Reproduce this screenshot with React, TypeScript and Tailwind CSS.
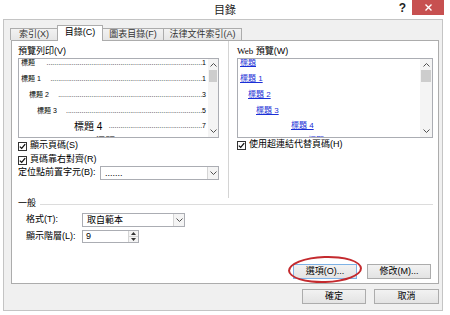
import React from 'react';

const Chevron = ({ up }: { up?: boolean }) => (
  <svg width="7" height="4" viewBox="0 0 7 4">
    <path d={up ? 'M0.5 3.5 L3.5 0.5 L6.5 3.5' : 'M0.5 0.5 L3.5 3.5 L6.5 0.5'} fill="none" stroke="#505050" strokeWidth="1" />
  </svg>
);

const Check = () => (
  <span className="w-[9px] h-[9px] border border-[#333] bg-white flex items-center justify-center shrink-0">
    <svg width="7" height="7" viewBox="0 0 7 7">
      <path d="M0.8 3.6 L2.7 5.4 L6.2 1.2" fill="none" stroke="#111" strokeWidth="1.3" />
    </svg>
  </span>
);

const Scrollbar = ({ w }: { w: string }) => (
  <div className={`${w} flex flex-col bg-[#f4f4f4]`}>
    <div className="h-[11px] flex items-center justify-center"><Chevron up /></div>
    <div className="h-[12px] bg-[#cdcdcd] mx-px" />
    <div className="flex-1" />
    <div className="h-[12px] flex items-center justify-center"><Chevron /></div>
  </div>
);

const Combo = ({ text, className }: { text: string; className: string }) => (
  <div className={`${className} h-full border border-[#abadb3] bg-white flex`}>
    <div className="flex-1 pl-[4px] leading-[12px] text-[9px] overflow-hidden whitespace-nowrap">{text}</div>
    <div className="w-[11px] border-l border-[#d5d5d5] bg-[#f4f4f4] flex items-center justify-center">
      <Chevron />
    </div>
  </div>
);

const Btn = ({ label, className }: { label: string; className: string }) => (
  <div className={`${className} h-[15px] border bg-gradient-to-b from-[#f2f2f2] to-[#e3e3e3] flex items-center justify-center text-[9px] leading-none`}>
    {label}
  </div>
);

// leader dots sized to fit each line
const TocLine = ({ pad, label, num, big, h, n }: { pad: string; label: string; num: string; big?: boolean; h: string; n: number }) => (
  <div className={`${pad} ${h} flex items-center pr-[2px] whitespace-nowrap ${big ? 'text-[10px]' : 'text-[7px]'}`}>
    <span>{label}</span>
    <span className="flex-1 text-right text-[7px] text-[#222]">{'.'.repeat(n)}</span>
    <span className="text-[7px]">{num}</span>
  </div>
);

const WebLine = ({ pad, label, h }: { pad: string; label: string; h: string }) => (
  <div className={`${pad} ${h} flex items-center text-[8px] whitespace-nowrap`}>
    <span className="text-[#1a2fd6] underline">{label}</span>
  </div>
);

export default function App() {
  return (
    <div className="relative w-[450px] h-[315px] bg-white overflow-hidden text-black font-['Liberation_Sans','Noto_Sans_CJK_TC',sans-serif]">
      {/* title bar */}
      <div className="h-[19px] grid grid-cols-[1fr_auto_1fr]">
        <div />
        <div className="text-[11px] leading-[20px] text-[#222]">目錄</div>
        <div className="flex justify-end items-start">
          <span className="text-[12px] font-bold leading-[16px] mr-[6px] text-[#222]">?</span>
          <div className="w-[32px] h-[15px] mr-[6px] bg-[#c75050] flex items-center justify-center">
            <svg width="7" height="7" viewBox="0 0 7 7">
              <path d="M0.5 0.5 L6.5 6.5 M6.5 0.5 L0.5 6.5" stroke="#fff" strokeWidth="1.4" />
            </svg>
          </div>
        </div>
      </div>

      {/* client area */}
      <div className="ml-[3px] w-[440px] h-[292px] border border-[#c4c4c4] bg-[#f0f0f0] pl-[6px] pt-[5px]">
        <div className="relative z-10 flex items-end h-[16px] -mb-px text-[9px]">
          <div className="w-[47px] h-[12px] mb-px border-t border-l border-[#acacac] bg-gradient-to-b from-[#f2f2f2] to-[#e6e6e6] flex items-center justify-center text-[#333]">索引(X)</div>
          <div className="w-[46px] h-[16px] border-t border-l border-r border-[#acacac] bg-white flex items-center justify-center pb-[2px]">目錄(C)</div>
          <div className="w-[60px] h-[12px] mb-px border-t border-[#acacac] bg-gradient-to-b from-[#f2f2f2] to-[#e6e6e6] flex items-center justify-center text-[#333]">圖表目錄(F)</div>
          <div className="w-[79px] h-[12px] mb-px border-t border-l border-r border-[#acacac] bg-gradient-to-b from-[#f2f2f2] to-[#e6e6e6] flex items-center justify-center text-[#333]">法律文件索引(A)</div>
        </div>

        <div className="ml-px w-[428px] h-[244px] border border-[#acacac] bg-white pl-[6px] pr-[5px] pt-[4px] text-[9px]">
          <div className="flex">
            {/* left column */}
            <div className="w-[201px] flex flex-col">
              <div className="h-[13px] leading-[13px]">預覽列印(V)</div>
              <div className="h-[80px] border border-[#abadb3] flex">
                <div className="flex-1 overflow-hidden">
                  <div className="-mt-[4px]">
                    <TocLine pad="pl-[2px]" h="h-[16px]" label="標題 " num="1" n={80} />
                    <TocLine pad="pl-[2px]" h="h-[16px]" label="標題 1" num="1" n={78} />
                    <TocLine pad="pl-[10px]" h="h-[16px]" label="標題 2" num="3" n={74} />
                    <TocLine pad="pl-[18px]" h="h-[16px]" label="標題 3" num="5" n={70} />
                    <TocLine pad="pl-[55px]" h="h-[14px]" label="標題 4" num="7" n={48} big />
                    <TocLine pad="pl-[76px]" h="h-[16px]" label="標題 5" num="9" n={37} big />
                  </div>
                </div>
                <Scrollbar w="w-[10px]" />
              </div>
              <div className="mt-[2px] h-[12px] flex items-center gap-[3px]"><Check /><span>顯示頁碼(S)</span></div>
              <div className="mt-[2px] h-[12px] flex items-center gap-[3px]"><Check /><span>頁碼靠右對齊(R)</span></div>
              <div className="h-[14px] flex items-center">
                <span>定位點前置字元(B):</span>
                <Combo text="......." className="ml-auto w-[119px]" />
              </div>
            </div>

            <div className="ml-[9px] w-px -mt-[4px] h-[157px] bg-[#d4d4d4]" />

            {/* right column */}
            <div className="ml-[8px] w-[196px] flex flex-col">
              <div className="h-[13px] leading-[13px]"><span className="font-['Liberation_Serif',serif]">Web</span> 預覽(W)</div>
              <div className="h-[80px] border border-[#abadb3] flex">
                <div className="flex-1 overflow-hidden">
                  <div className="-mt-[4px]">
                    <WebLine pad="pl-[2px]" h="h-[16px]" label="標題" />
                    <WebLine pad="pl-[2px]" h="h-[16px]" label="標題 1" />
                    <WebLine pad="pl-[10px]" h="h-[16px]" label="標題 2" />
                    <WebLine pad="pl-[18px]" h="h-[16px]" label="標題 3" />
                    <WebLine pad="pl-[53px]" h="h-[14px]" label="標題 4" />
                    <WebLine pad="pl-[70px]" h="h-[16px]" label="標題 5" />
                  </div>
                </div>
                <Scrollbar w="w-[12px]" />
              </div>
              <div className="mt-px h-[12px] flex items-center gap-[3px]"><Check /><span>使用超連結代替頁碼(H)</span></div>
            </div>
          </div>

          {/* general */}
          <div className="h-[12px] flex items-center">
            <span>一般</span>
            <div className="ml-[4px] flex-1 h-px bg-[#dcdcdc]" />
          </div>
          <div className="mt-[3px] h-[14px] flex items-center pl-[8px]">
            <span className="w-[56px]">格式(T):</span>
            <Combo text="取自範本" className="w-[103px]" />
          </div>
          <div className="mt-[3px] h-[13px] flex items-center pl-[8px]">
            <span className="w-[56px]">顯示階層(L):</span>
            <div className="w-[57px] h-full border border-[#abadb3] bg-white flex">
              <div className="flex-1 pl-[3px] leading-[11px]">9</div>
              <div className="w-[10px] flex flex-col border-l border-[#d5d5d5] bg-[#f4f4f4]">
                <div className="flex-1 flex items-center justify-center border-b border-[#d5d5d5]">
                  <svg width="5" height="3" viewBox="0 0 5 3"><path d="M0 3 L2.5 0 L5 3 Z" fill="#333" /></svg>
                </div>
                <div className="flex-1 flex items-center justify-center">
                  <svg width="5" height="3" viewBox="0 0 5 3"><path d="M0 0 L2.5 3 L5 0 Z" fill="#333" /></svg>
                </div>
              </div>
            </div>
          </div>
          <div className="mt-[21px] mr-[2px] flex justify-end gap-[10px]">
            <Btn label="選項(O)..." className="w-[64px] border-[#7fb2e5]" />
            <Btn label="修改(M)..." className="w-[64px] border-[#acacac]" />
          </div>
        </div>

        <div className="mt-[5px] ml-px w-[428px] flex justify-end gap-[8px]">
          <Btn label="確定" className="w-[64px] border-[#acacac]" />
          <Btn label="取消" className="w-[65px] border-[#acacac]" />
        </div>
      </div>

      {/* red annotation ellipse */}
      <div className="absolute left-[288px] top-[256px] w-[74px] h-[27px] rounded-[50%] border-2 border-[#c42a2e] -rotate-2" />
    </div>
  );
}
